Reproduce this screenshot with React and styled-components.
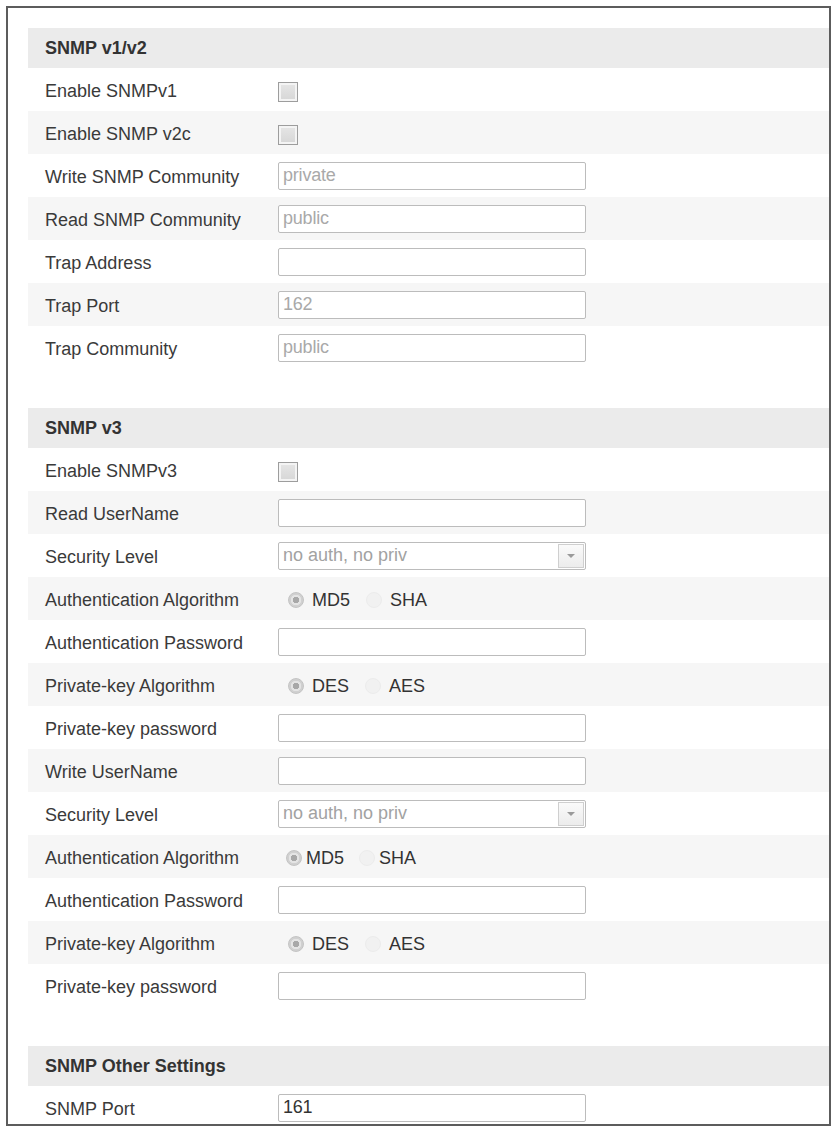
import React from "react";
import styled, { createGlobalStyle } from "styled-components";

const GlobalStyle = createGlobalStyle`
  html, body {
    margin: 0;
    padding: 0;
    background: #fff;
    overflow: hidden;
  }
  body {
    font-family: "Liberation Sans", Arial, sans-serif;
    color: #333;
  }
`;

const Page = styled.div`
  box-sizing: border-box;
  width: 834px;
  height: 1128px;
  padding: 6px 3px 2px 6px;
`;

const Frame = styled.div`
  box-sizing: border-box;
  height: 1120px;
  border: 2px solid #5c5c5c;
  padding: 20px 0 0 20px;
  overflow: hidden;
  display: flex;
  flex-direction: column;
  gap: 39px;
`;

const Section = styled.section`
  display: flex;
  flex-direction: column;
`;

const SectionHeader = styled.div`
  height: 40px;
  display: flex;
  align-items: center;
  padding-left: 17px;
  background: #ebebeb;
  font-size: 18px;
  font-weight: bold;
  color: #333;
`;

const Row = styled.div`
  height: 43px;
  display: grid;
  grid-template-columns: 250px 1fr;
  align-items: center;
  background: ${(p) => (p.$alt ? "#f6f6f6" : "#fff")};
`;

const Label = styled.div`
  padding-left: 17px;
  padding-top: 3px;
  font-size: 18px;
  color: #3a3a3a;
  white-space: nowrap;
`;

const Control = styled.div`
  display: flex;
  align-items: center;
`;

const TextInput = styled.input`
  box-sizing: border-box;
  width: 308px;
  height: 28px;
  margin: 0;
  padding: 0 4px;
  border: 1px solid #bcbcbc;
  border-radius: 2px;
  background: #fff;
  font-family: "Liberation Sans", Arial, sans-serif;
  font-size: 18px;
  letter-spacing: -0.2px;
  color: #333;
  outline: none;

  &::placeholder {
    color: #a9a9a9;
  }
`;

const CheckBox = styled.span`
  box-sizing: border-box;
  display: block;
  width: 20px;
  height: 20px;
  margin-top: 4px;
  border: 1px solid #9d9d9d;
  background: linear-gradient(#e6e6e6, #d6d6d6);
  box-shadow: inset 0 0 0 2px #f4f4f4;
`;

const SelectBox = styled.div`
  box-sizing: border-box;
  width: 308px;
  height: 28px;
  display: flex;
  align-items: stretch;
  border: 1px solid #bcbcbc;
  border-radius: 2px;
  background: #fff;
`;

const SelectText = styled.div`
  flex: 1;
  display: flex;
  align-items: center;
  padding-left: 4px;
  font-size: 18px;
  color: #a2a2a2;
`;

const SelectArrow = styled.div`
  width: 24px;
  margin: 1px;
  display: flex;
  align-items: center;
  justify-content: center;
  border: 1px solid #cfcfcf;
  background: linear-gradient(#fafafa, #ececec);

  &::after {
    content: "";
    border-left: 4px solid transparent;
    border-right: 4px solid transparent;
    border-top: 4px solid #9a9a9a;
  }
`;

const RadioGroup = styled.div`
  display: flex;
  align-items: center;
  padding-left: ${(p) => (p.$tight ? "8px" : "10px")};
  padding-top: 3px;
`;

const RadioOption = styled.label`
  display: flex;
  align-items: center;
  gap: ${(p) => (p.$tight ? "4px" : "8px")};
  margin-right: ${(p) => (p.$tight ? "15px" : "16px")};
  font-size: 18px;
  color: #333;
`;

const RadioDot = styled.span`
  box-sizing: border-box;
  display: block;
  width: 16px;
  height: 16px;
  border-radius: 50%;
  ${(p) =>
    p.$checked
      ? `
    border: 1px solid #c4c4c4;
    background: radial-gradient(circle, #a8a8a8 0 3px, #e4e4e4 3.5px 5px, #d0d0d0 5.5px);
  `
      : `
    border: 1px solid #ececec;
    background: #f1f1f1;
  `}
`;

function Radios({ options, tight }) {
  return (
    <RadioGroup $tight={tight}>
      {options.map((o, i) => (
        <RadioOption key={o} $tight={tight}>
          <RadioDot $checked={i === 0} />
          {o}
        </RadioOption>
      ))}
    </RadioGroup>
  );
}

function Field({ type, placeholder, value, options, tight }) {
  if (type === "check") return <CheckBox />;
  if (type === "select")
    return (
      <SelectBox>
        <SelectText>{value}</SelectText>
        <SelectArrow />
      </SelectBox>
    );
  if (type === "radio") return <Radios options={options} tight={tight} />;
  return (
    <TextInput
      type="text"
      placeholder={placeholder}
      defaultValue={value}
      readOnly
    />
  );
}

const sections = [
  {
    title: "SNMP v1/v2",
    rows: [
      { label: "Enable SNMPv1", type: "check" },
      { label: "Enable SNMP v2c", type: "check" },
      { label: "Write SNMP Community", placeholder: "private" },
      { label: "Read SNMP Community", placeholder: "public" },
      { label: "Trap Address" },
      { label: "Trap Port", placeholder: "162" },
      { label: "Trap Community", placeholder: "public" },
    ],
  },
  {
    title: "SNMP v3",
    rows: [
      { label: "Enable SNMPv3", type: "check" },
      { label: "Read UserName" },
      { label: "Security Level", type: "select", value: "no auth, no priv" },
      { label: "Authentication Algorithm", type: "radio", options: ["MD5", "SHA"] },
      { label: "Authentication Password" },
      { label: "Private-key Algorithm", type: "radio", options: ["DES", "AES"] },
      { label: "Private-key password" },
      { label: "Write UserName" },
      { label: "Security Level", type: "select", value: "no auth, no priv" },
      { label: "Authentication Algorithm", type: "radio", options: ["MD5", "SHA"], tight: true },
      { label: "Authentication Password" },
      { label: "Private-key Algorithm", type: "radio", options: ["DES", "AES"] },
      { label: "Private-key password" },
    ],
  },
  {
    title: "SNMP Other Settings",
    rows: [{ label: "SNMP Port", value: "161" }],
  },
];

export default function App() {
  return (
    <Page>
      <GlobalStyle />
      <Frame>
        {sections.map((s) => (
          <Section key={s.title}>
            <SectionHeader>{s.title}</SectionHeader>
            {s.rows.map((r, i) => (
              <Row key={i} $alt={i % 2 === 1}>
                <Label>{r.label}</Label>
                <Control>
                  <Field {...r} />
                </Control>
              </Row>
            ))}
          </Section>
        ))}
      </Frame>
    </Page>
  );
}
